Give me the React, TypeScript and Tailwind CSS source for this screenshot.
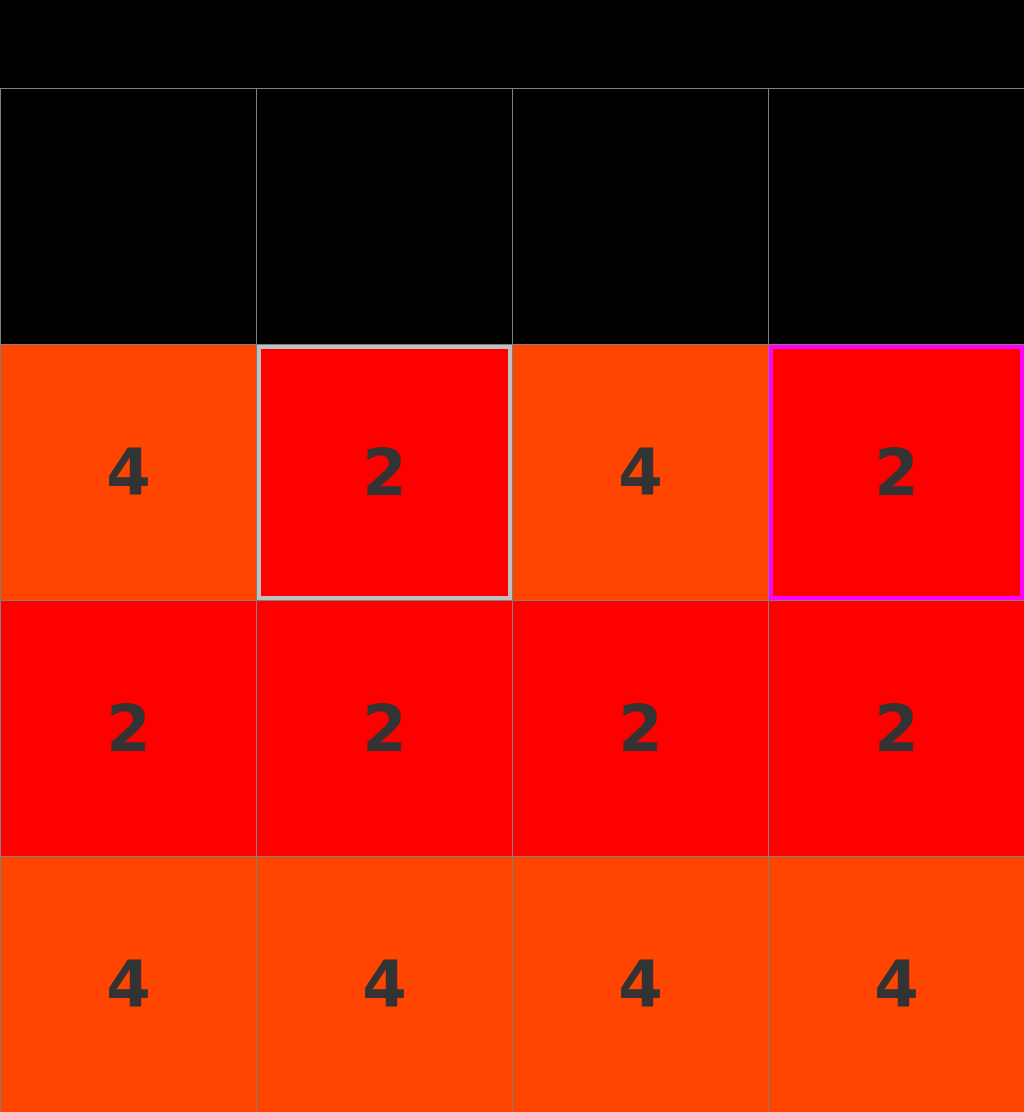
type Cell = { value: number; ring?: "silver" | "magenta" };

const rows: Cell[][] = [
  [{ value: 0 }, { value: 0 }, { value: 0 }, { value: 0 }],
  [{ value: 4 }, { value: 2, ring: "silver" }, { value: 4 }, { value: 2, ring: "magenta" }],
  [{ value: 2 }, { value: 2 }, { value: 2 }, { value: 2 }],
  [{ value: 4 }, { value: 4 }, { value: 4 }, { value: 4 }],
];

function tileBg(v: number): string {
  if (v === 2) return "bg-[#ff0000]";
  if (v === 4) return "bg-[#ff4500]";
  return "bg-black";
}

function ringClass(r?: Cell["ring"]): string {
  if (r === "silver") return "border-4 border-[#c0c0c0]";
  if (r === "magenta") return "border-4 border-[#ff00ff]";
  return "";
}

export default function App() {
  return (
    <div className="w-[1024px] h-[1112px] bg-black flex flex-col font-['DejaVu_Sans',sans-serif]">
      {/* Header strip */}
      <div className="h-[88px] bg-black" />

      {/* Board */}
      <div className="grid grid-cols-4">
        {rows.flat().map((cell, i) => (
          <div
            key={i}
            className={`h-[256px] border-l border-t border-[#808080] ${tileBg(cell.value)}`}
          >
            <div
              className={`w-full h-full flex items-center justify-center ${ringClass(cell.ring)}`}
            >
              {cell.value > 0 && (
                <span className="text-[64px] font-bold leading-none text-[#333333]">
                  {cell.value}
                </span>
              )}
            </div>
          </div>
        ))}
      </div>
    </div>
  );
}
